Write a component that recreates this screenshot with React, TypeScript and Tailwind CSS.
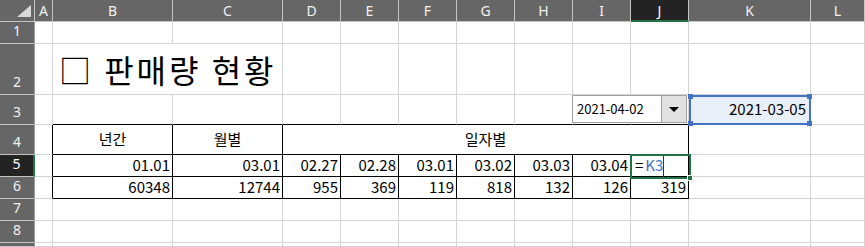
import React from 'react';

const COLS = ['A', 'B', 'C', 'D', 'E', 'F', 'G', 'H', 'I', 'J', 'K', 'L'];

const GRAY = 'border-r border-b border-[#d4d4d4]';
const BOX = 'border-r border-b border-black';

type CellProps = {
	className?: string;
	children?: React.ReactNode;
};

function Cell({ className = '', children }: CellProps) {
	return (
		<div className={`flex items-center whitespace-nowrap overflow-visible ${className}`}>
			{children}
		</div>
	);
}

function RowHead({ n, active = false }: { n?: number; active?: boolean }) {
	return (
		<div
			className={`flex items-end justify-center pb-[2px] text-[14px] border-b border-b-[#c4c4c4] ${
				active
					? 'bg-[#232323] text-white border-r-2 border-r-[#217346]'
					: 'bg-[#666666] text-[#f2f2f2] border-r border-r-[#9a9a9a]'
			}`}
			style={{ fontFamily: '"Noto Sans", sans-serif' }}
		>
			{n}
		</div>
	);
}

function Num({ v, className = GRAY }: { v: string; className?: string }) {
	return <Cell className={`justify-end pr-[2px] ${className}`}>{v}</Cell>;
}

export default function App() {
	return (
		<div
			className="relative w-[865px] h-[247px] overflow-hidden bg-white text-black"
			style={{ fontFamily: '"Noto Sans CJK KR", "Noto Sans", sans-serif' }}
		>
			<div className="grid h-full grid-cols-[35px_18px_120px_110px_58px_58px_58px_58px_58px_58px_58px_122px_1fr] grid-rows-[22px_22px_51px_30px_30px_22px_22px_22px_22px_1fr] text-[15px]">
				{/* column header */}
				<div className="relative bg-[#666666] border-r border-b border-[#c4c4c4]">
					<div className="absolute right-[3px] bottom-[4px] w-0 h-0 border-l-[14px] border-l-transparent border-b-[12px] border-b-[#d9d9d9]" />
				</div>
				{COLS.map((c) =>
					c === 'J' ? (
						<div
							key={c}
							className="flex items-center justify-center text-[14px] bg-[#232323] text-white border-r border-r-[#c4c4c4] border-b-2 border-b-[#217346]"
							style={{ fontFamily: '"Noto Sans", sans-serif' }}
						>
							{c}
						</div>
					) : (
						<div
							key={c}
							className="flex items-center justify-center text-[14px] bg-[#666666] text-[#f2f2f2] border-r border-b border-[#c4c4c4]"
							style={{ fontFamily: '"Noto Sans", sans-serif' }}
						>
							{c}
						</div>
					)
				)}

				{/* row 1 */}
				<RowHead n={1} />
				{COLS.map((c) => (
					<Cell key={c} className={GRAY} />
				))}

				{/* row 2 */}
				<RowHead n={2} />
				<Cell className={GRAY} />
				<Cell className={`col-span-2 pl-[6px] text-[32px] tracking-[3px] ${GRAY}`}>
					<span className="leading-none">□ 판매량 현황</span>
				</Cell>
				{COLS.slice(3).map((c) => (
					<Cell key={c} className={GRAY} />
				))}

				{/* row 3 */}
				<RowHead n={3} />
				<Cell className={GRAY} />
				{COLS.slice(1, 10).map((c) => (
					<Cell key={c} className="border-r border-b border-r-[#d4d4d4] border-b-black" />
				))}
				<Cell className="justify-end pr-[4px] text-[15px] bg-[#e9eff9] border-r border-b border-[#d4d4d4]">
					2021-03-05
				</Cell>
				<Cell className={GRAY} />

				{/* row 4 */}
				<RowHead n={4} />
				<Cell className="border-r border-b border-r-black border-b-[#d4d4d4]" />
				<Cell className={`justify-center ${BOX}`}>년간</Cell>
				<Cell className={`justify-center ${BOX}`}>월별</Cell>
				<Cell className={`col-span-7 justify-center ${BOX}`}>일자별</Cell>
				<Cell className={GRAY} />
				<Cell className={GRAY} />

				{/* row 5 */}
				<RowHead n={5} active />
				<Cell className="border-r border-b border-r-black border-b-[#d4d4d4]" />
				{['01.01', '03.01', '02.27', '02.28', '03.01', '03.02', '03.03', '03.04'].map((v, i) => (
					<Num key={i} v={v} className={BOX} />
				))}
				<Cell className={`pl-[4px] ${BOX}`}>
					<span>=</span>
					<span className="text-[#4472c4] ml-[2px]">K3</span>
				</Cell>
				<Cell className={GRAY} />
				<Cell className={GRAY} />

				{/* row 6 */}
				<RowHead n={6} />
				<Cell className="border-r border-b border-r-black border-b-[#d4d4d4]" />
				{['60348', '12744', '955', '369', '119', '818', '132', '126', '319'].map((v, i) => (
					<Num key={i} v={v} className={BOX} />
				))}
				<Cell className={GRAY} />
				<Cell className={GRAY} />

				{/* rows 7-9 */}
				{[7, 8, 9].map((n) => (
					<React.Fragment key={n}>
						<RowHead n={n < 9 ? n : undefined} />
						{COLS.map((c) => (
							<Cell key={c} className={GRAY} />
						))}
					</React.Fragment>
				))}
			</div>

			{/* combo box over I3:J3 */}
			<div className="absolute left-[572px] top-[95px] flex h-[28px] w-[115px] border border-[#a0a0a0] bg-white">
				<div className="flex flex-1 items-center pl-[4px] text-[13px]">2021-04-02</div>
				<div className="flex w-[25px] items-center justify-center border-l border-[#a0a0a0] bg-[#e1e1e1]">
					<div className="h-0 w-0 border-l-[5px] border-r-[5px] border-t-[5px] border-l-transparent border-r-transparent border-t-black" />
				</div>
			</div>

			{/* reference highlight K3 */}
			<div className="absolute left-[689px] top-[95px] h-[30px] w-[122px] border-2 border-[#4472c4]">
				<div className="absolute -left-[3px] -top-[3px] h-[5px] w-[5px] bg-[#4472c4]" />
				<div className="absolute -right-[3px] -top-[3px] h-[5px] w-[5px] bg-[#4472c4]" />
				<div className="absolute -left-[3px] -bottom-[3px] h-[5px] w-[5px] bg-[#4472c4]" />
				<div className="absolute -right-[3px] -bottom-[3px] h-[5px] w-[5px] bg-[#4472c4]" />
			</div>

			{/* active cell J5 */}
			<div className="absolute left-[630px] top-[154px] h-[25px] w-[61px] border-2 border-[#217346]">
				<div className="absolute left-[31px] top-0 h-full w-px bg-[#333333]" />
				<div className="absolute -right-[4px] -bottom-[4px] h-[6px] w-[6px] bg-[#217346] border border-white" />
			</div>
		</div>
	);
}
